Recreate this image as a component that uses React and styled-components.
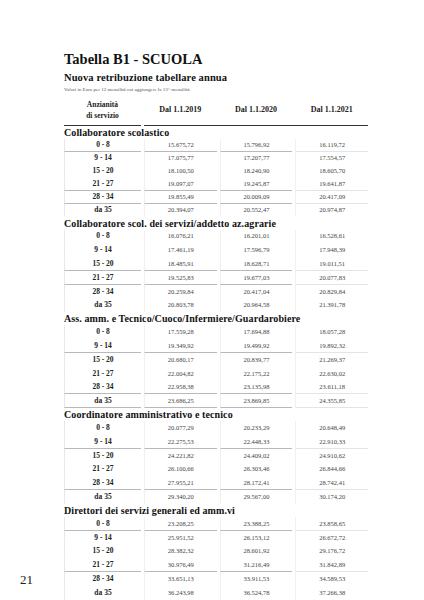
import React from "react";
import styled, { createGlobalStyle } from "styled-components";

const GlobalStyle = createGlobalStyle`
  html, body {
    margin: 0;
    background: #ffffff;
  }
  body {
    font-family: "Liberation Serif", "Times New Roman", serif;
    color: #111;
  }
`;

const LABELS = ["0 - 8", "9 - 14", "15 - 20", "21 - 27", "28 - 34", "da 35"];

const SECTIONS = [
  {
    title: "Collaboratore scolastico",
    lines: [0, 3, 4],
    rows: [
      ["15.675,72", "15.796,92", "16.119,72"],
      ["17.075,77", "17.207,77", "17.554,57"],
      ["18.100,50", "18.240,90", "18.605,70"],
      ["19.097,07", "19.245,87", "19.641,87"],
      ["19.855,49", "20.009,09", "20.417,09"],
      ["20.394,07", "20.552,47", "20.974,87"],
    ],
  },
  {
    title: "Collaboratore scol. dei servizi/addetto az.agrarie",
    lines: [2, 3],
    rows: [
      ["16.076,21", "16.201,01", "16.528,61"],
      ["17.461,19", "17.596,79", "17.948,39"],
      ["18.485,91", "18.628,71", "19.011,51"],
      ["19.525,83", "19.677,03", "20.077,83"],
      ["20.259,84", "20.417,04", "20.829,84"],
      ["20.803,78", "20.964,58", "21.391,78"],
    ],
  },
  {
    title: "Ass. amm. e Tecnico/Cuoco/Infermiere/Guardarobiere",
    lines: [1, 4, 5],
    rows: [
      ["17.559,28", "17.694,88", "18.057,28"],
      ["19.349,92", "19.499,92", "19.892,32"],
      ["20.680,17", "20.839,77", "21.269,37"],
      ["22.004,82", "22.175,22", "22.630,02"],
      ["22.958,38", "23.135,98", "23.611,18"],
      ["23.686,25", "23.869,85", "24.355,85"],
    ],
  },
  {
    title: "Coordinatore amministrativo e tecnico",
    lines: [1, 4],
    rows: [
      ["20.077,29", "20.233,29", "20.648,49"],
      ["22.275,53", "22.448,33", "22.910,33"],
      ["24.221,82", "24.409,02", "24.910,62"],
      ["26.100,66", "26.303,46", "26.844,66"],
      ["27.955,21", "28.172,41", "28.742,41"],
      ["29.340,20", "29.567,00", "30.174,20"],
    ],
  },
  {
    title: "Direttori dei servizi generali ed amm.vi",
    lines: [0, 3],
    rows: [
      ["23.208,25", "23.388,25", "23.858,65"],
      ["25.951,52", "26.153,12", "26.672,72"],
      ["28.382,32", "28.601,92", "29.176,72"],
      ["30.976,49", "31.216,49", "31.842,89"],
      ["33.651,13", "33.911,53", "34.589,53"],
      ["36.243,98", "36.524,78", "37.266,38"],
    ],
  },
];

const App = () => {
  return (
    <>
      <GlobalStyle />
      <Page>
        <PageNumber>21</PageNumber>
        <Content>
          <Title>Tabella B1 - SCUOLA</Title>
          <Subtitle>Nuova retribuzione tabellare annua</Subtitle>
          <Note>Valori in Euro per 12 mensilità cui aggiungere la 13^ mensilità</Note>

          <Header>
            <HeadLabel>
              Anzianità
              <br />
              di servizio
            </HeadLabel>
            <HeadDates>
              <HeadDate>Dal 1.1.2019</HeadDate>
              <HeadDate>Dal 1.1.2020</HeadDate>
              <HeadDate>Dal 1.1.2021</HeadDate>
            </HeadDates>
          </Header>

          {SECTIONS.map((section, i) => (
            <Section key={section.title}>
              <SectionTitle>{section.title}</SectionTitle>
              {section.rows.map((values, r) => {
                const line = section.lines.includes(r);
                return (
                  <Row key={LABELS[r]} $tight={i === 0}>
                    <LabelCell $line={line}>{LABELS[r]}</LabelCell>
                    {values.map((v, c) => (
                      <ValueCell key={c} $line={line} $faint={c === 2}>
                        {v}
                      </ValueCell>
                    ))}
                  </Row>
                );
              })}
            </Section>
          ))}
        </Content>
      </Page>
    </>
  );
};

const Page = styled.div`
  display: grid;
  grid-template-columns: 64px 304px;
  align-items: start;
  padding-top: 51px;
  width: 424px;
  height: 600px;
  overflow: hidden;
  box-sizing: border-box;
`;

const PageNumber = styled.div`
  grid-column: 1;
  grid-row: 1;
  align-self: end;
  padding-left: 20px;
  margin-bottom: 14px;
  font-size: 13px;
  line-height: 13px;
  color: #222;
`;

const Content = styled.div`
  grid-column: 2;
  grid-row: 1;
`;

const Title = styled.h1`
  margin: 0;
  font-size: 14.5px;
  line-height: 16px;
  font-weight: 700;
  color: #111;
`;

const Subtitle = styled.h2`
  margin: 4px 0 0;
  font-size: 10.5px;
  line-height: 13px;
  font-weight: 700;
  letter-spacing: 0.1px;
  color: #111;
`;

const Note = styled.div`
  margin-top: 2px;
  font-size: 5px;
  line-height: 8px;
  color: #555;
  white-space: nowrap;
`;

const Header = styled.div`
  display: grid;
  grid-template-columns: 77px 1fr;
  column-gap: 3px;
`;

const HeadLabel = styled.div`
  padding: 6px 0 3.5px;
  border-bottom: 1.5px solid #333;
  text-align: center;
  font-size: 7.5px;
  line-height: 10.5px;
  font-weight: 700;
  color: #222;
`;

const HeadDates = styled.div`
  display: grid;
  grid-template-columns: repeat(3, 1fr);
  column-gap: 3px;
  align-items: center;
  border-bottom: 1.5px solid #333;
`;

const HeadDate = styled.div`
  text-align: center;
  font-size: 8px;
  font-weight: 700;
  color: #222;
  padding-top: 1px;
`;

const Section = styled.div`
  &:first-of-type {
    margin-top: 8px;
  }
`;

const SectionTitle = styled.div`
  height: 13px;
  padding-top: 1px;
  box-sizing: border-box;
  line-height: 12px;
  font-size: 10px;
  font-weight: 700;
  letter-spacing: 0.1px;
  color: #111;
  white-space: nowrap;
`;

const Row = styled.div`
  display: grid;
  grid-template-columns: 77px repeat(3, 1fr);
  column-gap: 3px;
  height: ${({ $tight }) => ($tight ? "13px" : "13.8px")};
`;

const Cell = styled.div`
  display: flex;
  align-items: center;
  justify-content: center;
  box-sizing: border-box;
  border-left: 1px solid #f0f0f0;
  border-bottom: 1px solid
    ${({ $line, $faint }) =>
      $line ? ($faint ? "#e4e4e4" : "#b9b9b9") : "transparent"};
`;

const LabelCell = styled(Cell)`
  border-left-color: #e8e8e8;
  font-size: 7.5px;
  font-weight: 700;
  color: #222;
`;

const ValueCell = styled(Cell)`
  font-size: 6.5px;
  color: #444;
`;

export default App;
